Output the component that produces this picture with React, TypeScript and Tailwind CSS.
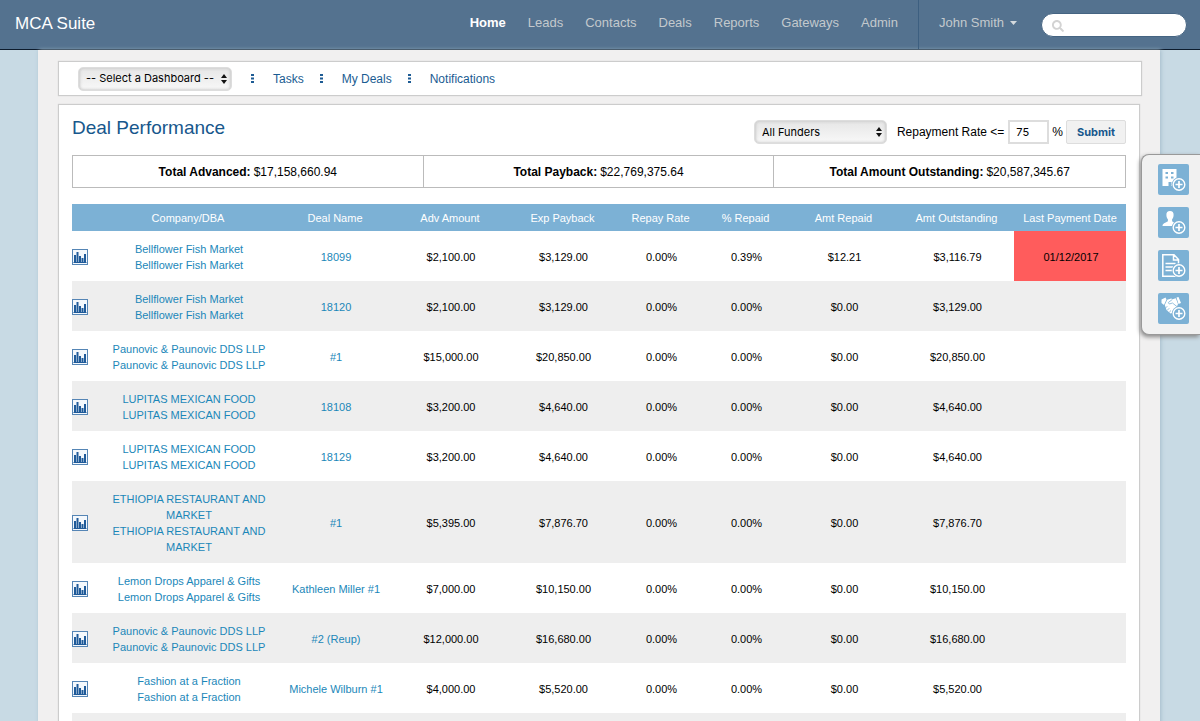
import { FaSearch } from 'react-icons/fa';

type Deal = {
  company: string;
  deal: string;
  adv: string;
  payback: string;
  rate: string;
  pct: string;
  repaid: string;
  outstanding: string;
  lastPayment?: string;
};

const navItems = ['Home', 'Leads', 'Contacts', 'Deals', 'Reports', 'Gateways', 'Admin'];

const totals = [
  { label: 'Total Advanced:', value: '$17,158,660.94' },
  { label: 'Total Payback:', value: '$22,769,375.64' },
  { label: 'Total Amount Outstanding:', value: '$20,587,345.67' },
];

const columns = [
  { label: '', width: 'w-[27px]' },
  { label: 'Company/DBA', width: 'w-[178px]' },
  { label: 'Deal Name', width: 'w-[116px]' },
  { label: 'Adv Amount', width: 'w-[114px]' },
  { label: 'Exp Payback', width: 'w-[111px]' },
  { label: 'Repay Rate', width: 'w-[85px]' },
  { label: '% Repaid', width: 'w-[85px]' },
  { label: 'Amt Repaid', width: 'w-[111px]' },
  { label: 'Amt Outstanding', width: 'w-[115px]' },
  { label: 'Last Payment Date', width: 'w-[112px]' },
];

const deals: Deal[] = [
  { company: 'Bellflower Fish Market', deal: '18099', adv: '$2,100.00', payback: '$3,129.00', rate: '0.00%', pct: '0.39%', repaid: '$12.21', outstanding: '$3,116.79', lastPayment: '01/12/2017' },
  { company: 'Bellflower Fish Market', deal: '18120', adv: '$2,100.00', payback: '$3,129.00', rate: '0.00%', pct: '0.00%', repaid: '$0.00', outstanding: '$3,129.00' },
  { company: 'Paunovic & Paunovic DDS LLP', deal: '#1', adv: '$15,000.00', payback: '$20,850.00', rate: '0.00%', pct: '0.00%', repaid: '$0.00', outstanding: '$20,850.00' },
  { company: 'LUPITAS MEXICAN FOOD', deal: '18108', adv: '$3,200.00', payback: '$4,640.00', rate: '0.00%', pct: '0.00%', repaid: '$0.00', outstanding: '$4,640.00' },
  { company: 'LUPITAS MEXICAN FOOD', deal: '18129', adv: '$3,200.00', payback: '$4,640.00', rate: '0.00%', pct: '0.00%', repaid: '$0.00', outstanding: '$4,640.00' },
  { company: 'ETHIOPIA RESTAURANT AND MARKET', deal: '#1', adv: '$5,395.00', payback: '$7,876.70', rate: '0.00%', pct: '0.00%', repaid: '$0.00', outstanding: '$7,876.70' },
  { company: 'Lemon Drops Apparel & Gifts', deal: 'Kathleen Miller #1', adv: '$7,000.00', payback: '$10,150.00', rate: '0.00%', pct: '0.00%', repaid: '$0.00', outstanding: '$10,150.00' },
  { company: 'Paunovic & Paunovic DDS LLP', deal: '#2 (Reup)', adv: '$12,000.00', payback: '$16,680.00', rate: '0.00%', pct: '0.00%', repaid: '$0.00', outstanding: '$16,680.00' },
  { company: 'Fashion at a Fraction', deal: 'Michele Wilburn #1', adv: '$4,000.00', payback: '$5,520.00', rate: '0.00%', pct: '0.00%', repaid: '$0.00', outstanding: '$5,520.00' },
];

function ChartIcon() {
  return (
    <svg width="16" height="16" viewBox="0 0 16 16" className="block">
      <rect x="0.5" y="0.5" width="15" height="15" fill="#f4f8fc" stroke="#5585b5" />
      <path d="M2 13V6h2v7zM4.500 13V3h2v10zM7 13V7h2v6zM9.500 13V9h2v4zM12 13V5h2v8z" fill="#1f5a99" />
      <path d="M1.500 13.500h13" stroke="#1f5a99" />
    </svg>
  );
}

// small "add" circle that sits on every quick action icon
function PlusBadge() {
  return (
    <>
      <circle cx="21" cy="20.500" r="7.200" fill="#7cb1d5" />
      <circle cx="21" cy="20.500" r="5.800" fill="none" stroke="#fff" strokeWidth="1.400" />
      <path d="M21 17v7M17.500 20.500h7" stroke="#fff" strokeWidth="1.700" />
    </>
  );
}

const quickActions = [
  {
    label: 'Add company',
    icon: (
      <path fillRule="evenodd" fill="#fff" d="M4.500 5h14v17h-5v-4h-3v4h-6zM7.500 8v2h2.500V8zM13 8v2h2.500V8zM7.500 12.500v2H10v-2zM13 12.500v2h2.500v-2z" />
    ),
  },
  {
    label: 'Add contact',
    icon: (
      <path fill="#fff" d="M12 4c2.500 0 3.700 1.600 3.600 4-.1 2-.6 3.400-1.500 4.300v1.800c0 1.100 4.900 1.600 4.900 4.900H4.500c0-3.300 5.400-3.800 5.400-4.900v-1.800C9 11.400 8.500 10 8.400 8c-.1-2.400 1.100-4 3.600-4z" />
    ),
  },
  {
    label: 'Add document',
    icon: (
      <path fill="none" stroke="#fff" strokeWidth="1.500" d="M20.500 14V9.500L16 4.800H4.800v21.400h15.700V24M15.500 5v5h5M7.500 13.500h10M7.500 17h8M7.500 20.500h7" />
    ),
  },
  {
    label: 'Add deal',
    icon: (
      <g>
        {/* cuffs, then the clasped hands */}
        <path fill="#fff" d="M3.500 6.500l4-2 1 2-2.500 5.500-2.500-2zM18.500 4.500l2-.5 2.500 6-2.500 1z" />
        <path fill="#fff" d="M9.200 6.800l4-1.300 1.300.8 3.300-1 2.200 5.700-1 2.500-1.500 3.500-3 3-2 .5-4-3.500L6.800 12z" />
        <path fill="none" stroke="#7cb1d5" strokeWidth="0.800" d="M14.300 6.500l-4 3 1 1.500 3.200-1 4.700 3.800M7 15.500l2.300-2.300M9 17.500l2.300-2.300M11.200 19.300l1.800-1.800" />
      </g>
    ),
  },
];

function SelectArrows() {
  return (
    <svg width="6" height="10" viewBox="0 0 6 10" className="pointer-events-none absolute right-[5px] top-[7px]">
      <path d="M3 0l3 4H0zM3 10L0 6h6z" fill="#111" />
    </svg>
  );
}

function MenuDots() {
  return (
    <svg width="3" height="9" viewBox="0 0 3 9">
      <path d="M0 0h3v2H0zM0 3.500h3v2H0zM0 7h3v2H0z" fill="#1d5b94" />
    </svg>
  );
}

function Header() {
  return (
    <header className="flex h-[50px] justify-between border-b border-[#0d1b2c] bg-[#54728f] pl-[15px] pr-[13px]">
      <h1 className="pt-3 text-[17px] leading-6 text-white">MCA Suite</h1>
      <div className="flex">
        <nav className="flex gap-[22px] pr-5 pt-[13px] text-[13px] leading-5 text-[#c3c9cd]">
          {navItems.map((item) => (
            <a key={item} href="#" className={item === 'Home' ? 'font-bold text-white' : ''}>
              {item}
            </a>
          ))}
        </nav>
        <div className="flex border-l border-[#3d5f80] pl-5 pt-[13px]">
          <button className="flex h-5 items-center gap-[6px] text-[13px] leading-5 text-[#c3c9cd]">
            John Smith
            <svg width="7" height="4" viewBox="0 0 7 4">
              <path d="M0 0h7L3.500 4z" fill="#d5dade" />
            </svg>
          </button>
          <div className="relative ml-6 h-6 w-[146px]">
            <input type="search" aria-label="Search" className="block h-6 w-full rounded-full border border-[#456482] bg-white pl-7 pr-3 text-xs" />
            <FaSearch className="absolute left-[11px] top-[7px] text-[#d3d3d3]" size={12} />
          </div>
        </div>
      </div>
    </header>
  );
}

function Toolbar() {
  return (
    <div className="mr-[18px] flex h-[35px] items-center border border-[#ccc] bg-white pl-[19px] text-[12px] text-[#1a5c92] shadow-[0_0_1px_#ccc]">
      <div className="relative mr-[19px] h-6 w-[154px]">
        <select
          aria-label="Dashboard"
          className="h-6 w-full appearance-none rounded-[5px] border border-[#ddd] bg-gradient-to-b from-[#e6e6e6] to-[#f8f8f8] pl-[7px] font-[Inter,sans-serif] text-[11px] text-black shadow-[inset_1px_0_3px_#ccc,inset_-1px_0_3px_#ccc]"
        >
          <option>-- Select a Dashboard --</option>
        </select>
        <SelectArrows />
      </div>
      {['Tasks', 'My Deals', 'Notifications'].map((item) => (
        <div key={item} className="mr-4 flex items-center gap-[19px]">
          <MenuDots />
          <a href="#">{item}</a>
        </div>
      ))}
    </div>
  );
}

function DealTable() {
  return (
    <table className="mt-4 w-full table-fixed border-collapse text-center text-[11px] leading-4">
      <thead>
        <tr className="h-[27px] bg-[#7cb1d5] text-white">
          {columns.map((col) => (
            <th key={col.label} className={`${col.width} p-0 font-normal`}>
              {col.label}
            </th>
          ))}
        </tr>
      </thead>
      <tbody>
        {deals.map((row, i) => (
          <tr key={i} className="odd:bg-white even:bg-[#eee] [&>td]:pl-[2px] [&>td]:pt-[2px]">
            <td>
              <a href="#" aria-label={`Chart for ${row.company}`} className="-ml-[2px] block">
                <ChartIcon />
              </a>
            </td>
            <td className="pb-2 text-[#1b87b9]">
              <div className="px-2 pt-2">
                <a href="#" className="block">{row.company}</a>
                <a href="#" className="block">{row.company}</a>
              </div>
            </td>
            <td className="text-[#1b87b9]">
              <a href="#">{row.deal}</a>
            </td>
            <td>{row.adv}</td>
            <td>{row.payback}</td>
            <td>{row.rate}</td>
            <td>{row.pct}</td>
            <td>{row.repaid}</td>
            <td>{row.outstanding}</td>
            <td className={row.lastPayment ? 'bg-[#ff5c5c]' : ''}>{row.lastPayment}</td>
          </tr>
        ))}
        <tr className="h-[50px] bg-[#eee]">
          <td colSpan={10}></td>
        </tr>
      </tbody>
    </table>
  );
}

function QuickActions() {
  return (
    <aside className="absolute right-0 top-[154px] flex flex-col gap-3 rounded-l-lg border border-r-0 border-[#999] bg-[#f1f1f1] pb-[10px] pl-4 pr-[11px] pt-[9px] shadow-[-1px_2px_4px_#888]">
      {quickActions.map((action) => (
        <button key={action.label} aria-label={action.label} className="rounded-[2px] bg-[#7cb1d5]">
          <svg width="31" height="31" viewBox="0 0 31 31" className="block">
            {action.icon}
            <PlusBadge />
          </svg>
        </button>
      ))}
    </aside>
  );
}

export default function App() {
  return (
    <div className="relative h-screen overflow-hidden bg-[#c8dae4] font-['Liberation_Sans',Arial,sans-serif] text-black">
      <Header />
      <main className="ml-[38px] mr-10 bg-[#f1f0f0] pl-5 pt-[11px] shadow-[1px_0_4px_#a5bccb]">
        <Toolbar />
        <section className="mr-5 mt-2 border border-[#ccc] bg-white px-[13px] pt-[7px] shadow-[0_0_1px_#ccc]">
          <div className="flex items-start justify-between">
            <h2 className="text-[19px] leading-8 text-[#17578c]">Deal Performance</h2>
            <form className="flex items-center pt-2 text-[12px]">
              <div className="relative mr-[10px] h-6 w-[133px]">
                <select
                  aria-label="Funders"
                  className="h-6 w-full appearance-none rounded-[5px] border border-[#ddd] bg-gradient-to-b from-[#e6e6e6] to-[#f8f8f8] pl-[7px] font-[Inter,sans-serif] text-[11px] text-black shadow-[inset_1px_0_3px_#ccc,inset_-1px_0_3px_#ccc]"
                >
                  <option>All Funders</option>
                </select>
                <SelectArrows />
              </div>
              <label htmlFor="rate" className="mr-1">Repayment Rate &lt;=</label>
              <input id="rate" defaultValue="75" className="mr-[3px] h-6 w-[41px] border-2 border-[#ddd] pl-[6px] font-[Inter,sans-serif] text-[11px]" />
              <span className="mr-[3px]">%</span>
              <button type="button" className="h-6 w-[60px] rounded-[2px] border border-[#ddd] bg-[#f1f1f1] font-[Inter,sans-serif] text-[11px] font-bold text-[#17578c]">
                Submit
              </button>
            </form>
          </div>
          <div className="mt-[11px] grid h-[33px] grid-cols-3 divide-x divide-[#bbb] border border-[#bbb] text-[12px]">
            {totals.map((total) => (
              <div key={total.label} className="flex items-center justify-center gap-[3px]">
                <strong>{total.label}</strong>
                <span>{total.value}</span>
              </div>
            ))}
          </div>
          <DealTable />
        </section>
      </main>
      <QuickActions />
    </div>
  );
}
